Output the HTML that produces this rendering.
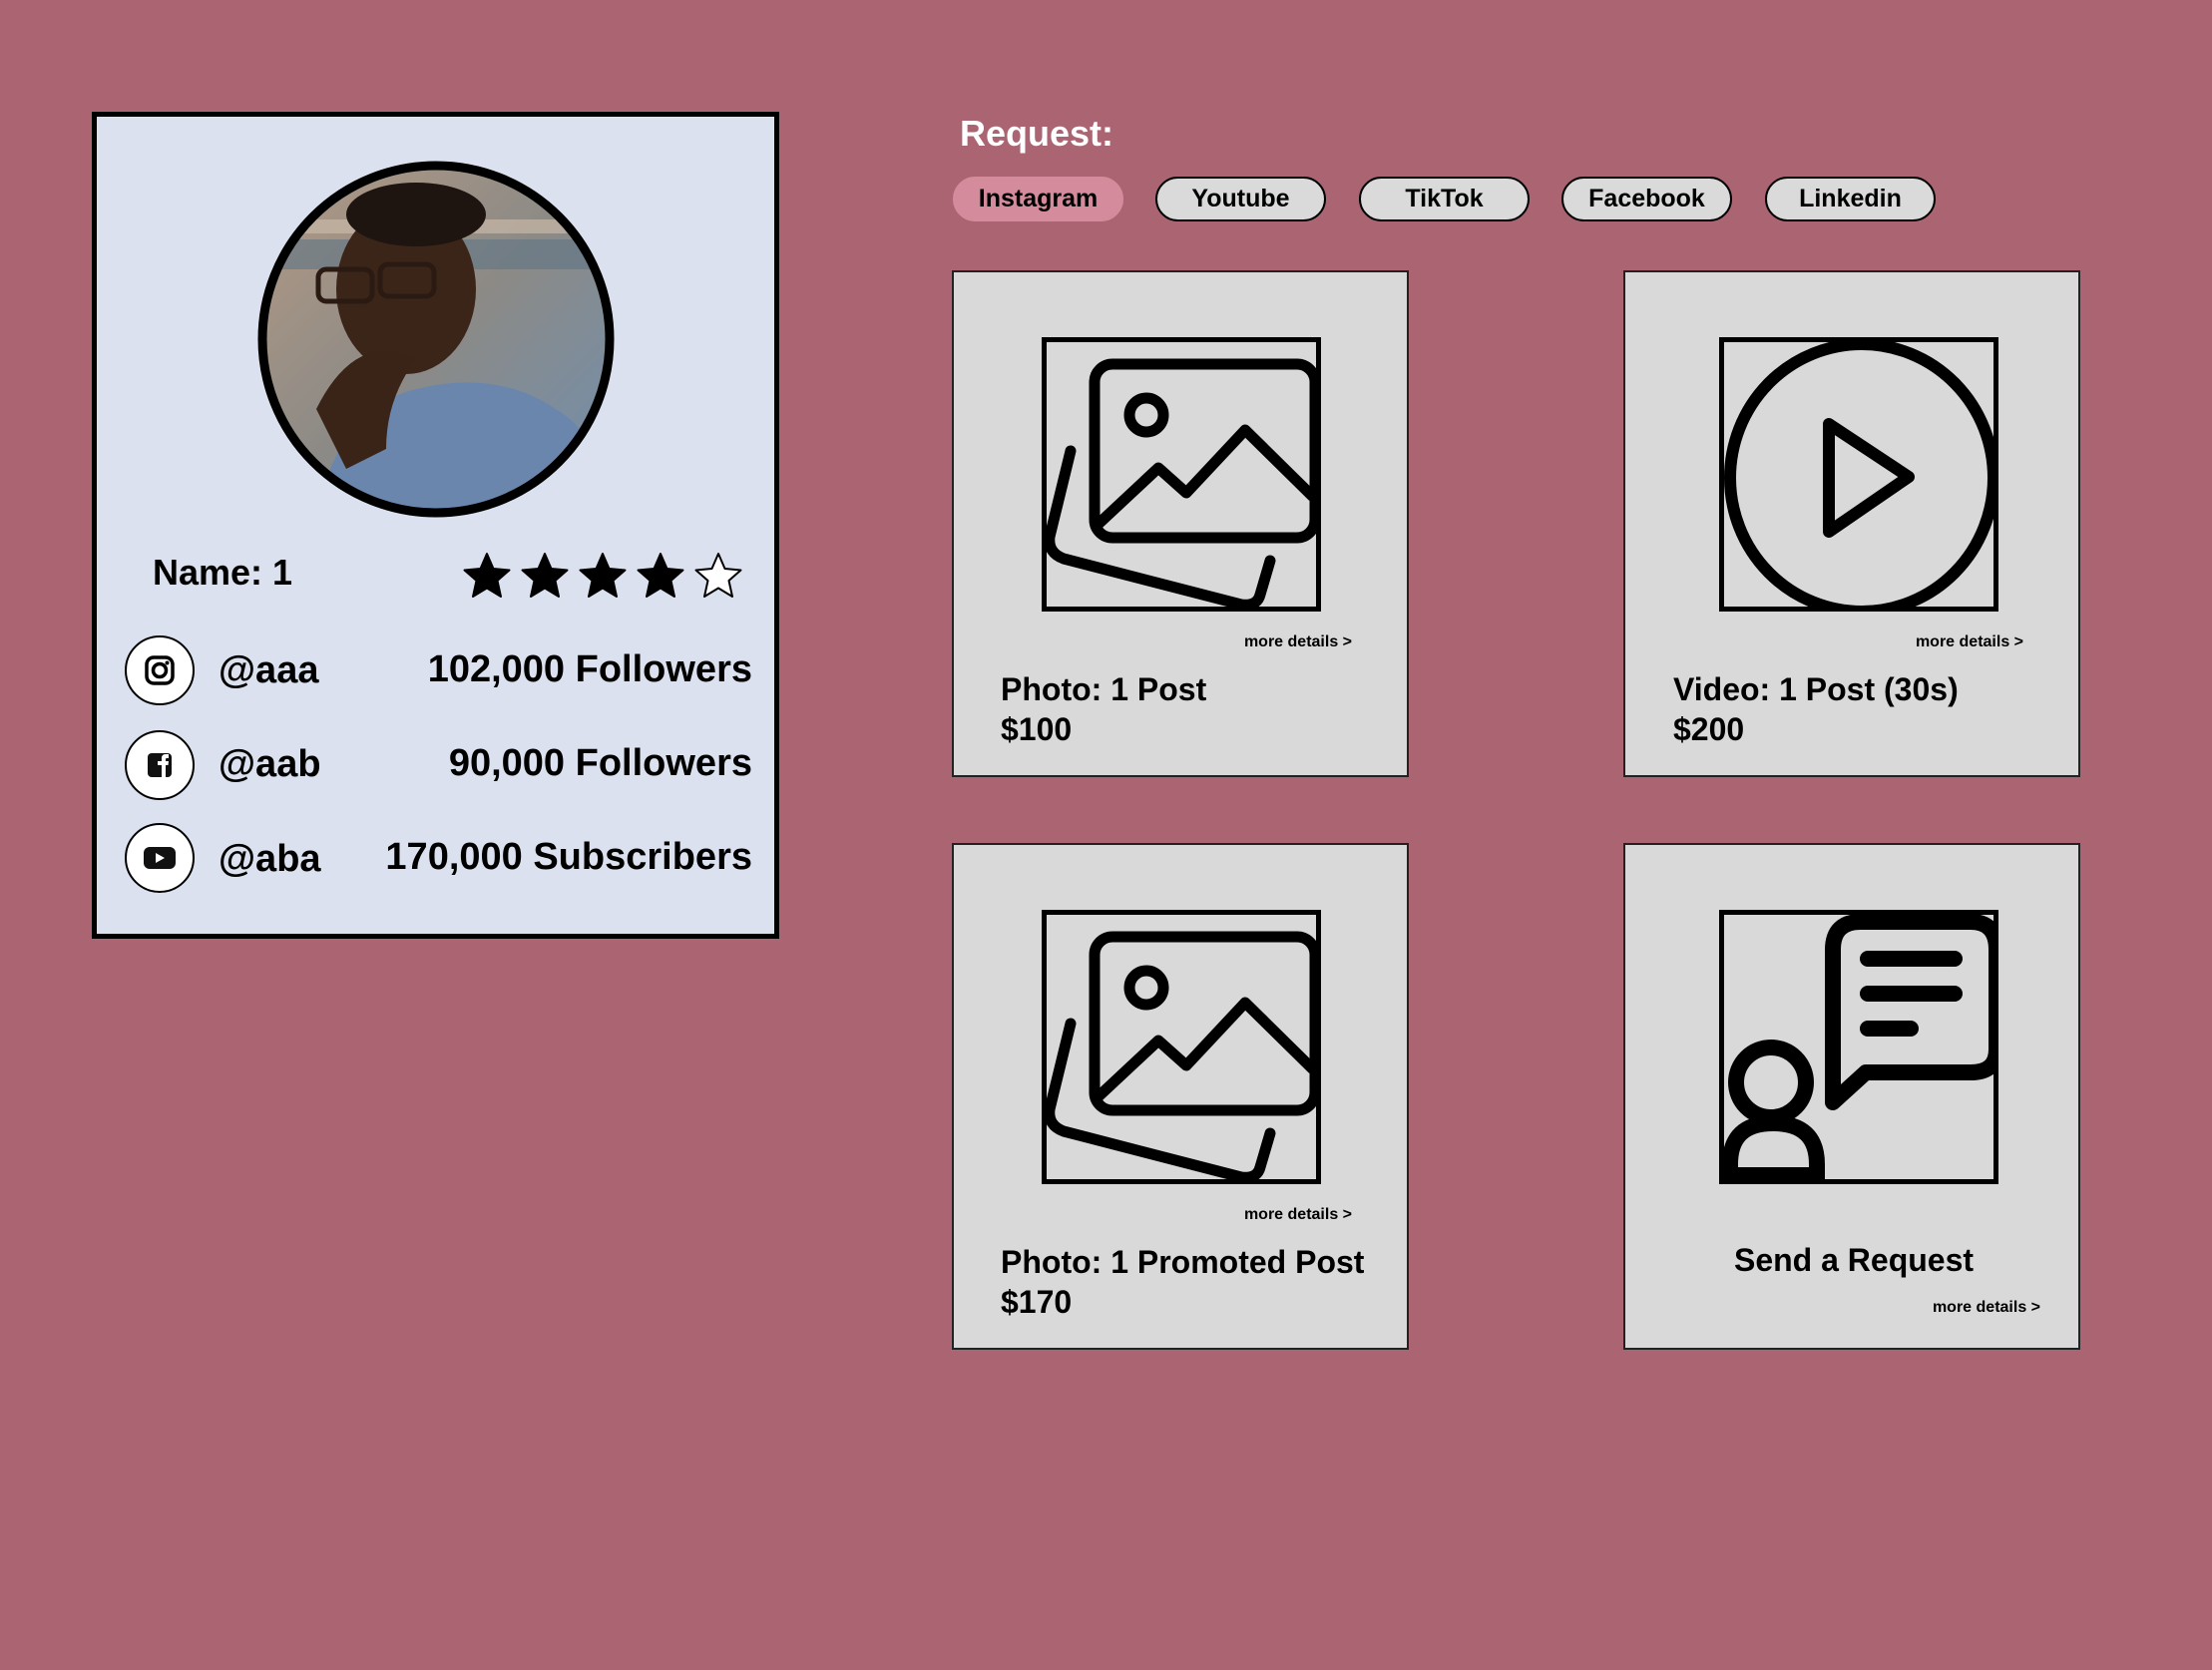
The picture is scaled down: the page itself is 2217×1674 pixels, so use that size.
<!DOCTYPE html>
<html><head><meta charset="utf-8"><style>
*{box-sizing:border-box;margin:0;padding:0}
body{width:2217px;height:1674px;background:#ab6472;font-family:"Liberation Sans",Arial,sans-serif;font-weight:bold;position:relative;overflow:hidden;color:#000}
.abs{position:absolute}
.profile{left:92px;top:112px;width:689px;height:829px;background:#dbe1ef;border:5px solid #000}
.txt{position:absolute;white-space:nowrap;line-height:1}
.soc{position:absolute;width:70px;height:70px;border-radius:50%;background:#fff;border:2px solid #000;left:28px}
.tab{position:absolute;top:177px;width:171px;height:45px;border-radius:23px;border:2px solid #000;background:#dadada;font-size:25px;text-align:center;line-height:41px}
.card{position:absolute;width:458px;height:508px;background:#d9d9d9;border:2px solid #222}
.box{position:absolute;top:65px;width:280px;height:275px;border:5px solid #000;overflow:hidden}
.box svg{position:absolute;left:-5px;top:-5px}
.md{position:absolute;font-size:16px;right:55px;top:362px}
.t1{position:absolute;left:47px;font-size:32px;top:400px}
.t2{position:absolute;left:47px;font-size:32px;top:440px}
</style></head><body>

<div class="abs profile">
  <svg class="abs" style="left:160px;top:43px" width="360" height="360" viewBox="0 0 360 360">
    <defs><clipPath id="cp"><circle cx="180" cy="180" r="174"/></clipPath>
    <linearGradient id="bg" x1="0" y1="0" x2="1" y2="1"><stop offset="0" stop-color="#b49a84"/><stop offset=".5" stop-color="#8c8a86"/><stop offset="1" stop-color="#6f8fb0"/></linearGradient></defs>
    <g clip-path="url(#cp)">
      <rect width="360" height="360" fill="url(#bg)"/>
      <rect x="0" y="80" width="360" height="30" fill="#5f7486" opacity=".6"/>
      <rect x="0" y="60" width="360" height="14" fill="#c8b8a6" opacity=".7"/>
      <path d="M60 360 Q80 250 160 230 Q240 210 300 250 Q350 280 360 360Z" fill="#6b86ad"/>
      <ellipse cx="150" cy="130" rx="70" ry="85" fill="#3b2418"/>
      <ellipse cx="160" cy="55" rx="70" ry="32" fill="#1e1410"/>
      <path d="M60 250 Q100 170 160 200 Q130 240 130 290 L90 310Z" fill="#3a2418"/>
      <rect x="62" y="110" width="54" height="32" rx="8" fill="none" stroke="#2a1a12" stroke-width="5"/>
      <rect x="124" y="105" width="54" height="32" rx="8" fill="none" stroke="#2a1a12" stroke-width="5"/>
    </g>
    <circle cx="180" cy="180" r="174" fill="none" stroke="#000" stroke-width="9"/>
  </svg>
  <div class="txt" style="left:56px;top:439px;font-size:36px">Name: 1</div>
  <svg class="abs" style="left:366px;top:434px" width="290" height="58" viewBox="0 0 290 58">
    <g fill="#000">
      <path id="st" d="M25 4 L31.5 19 L47.5 20.5 L35.5 31 L39 47 L25 38.5 L11 47 L14.5 31 L2.5 20.5 L18.5 19Z" stroke="#000" stroke-width="2" stroke-linejoin="round"/>
      <use href="#st" x="58"/><use href="#st" x="116"/><use href="#st" x="174"/>
    </g>
    <path d="M257 4 L263.5 19 L279.5 20.5 L267.5 31 L271 47 L257 38.5 L243 47 L246.5 31 L234.5 20.5 L250.5 19Z" fill="#fff" stroke="#000" stroke-width="2" stroke-linejoin="round"/>
  </svg>

  <div class="soc" style="top:520px"><svg width="66" height="66" viewBox="0 0 66 66"><rect x="20" y="20" width="26" height="26" rx="7" fill="none" stroke="#000" stroke-width="3.5"/><circle cx="33" cy="33" r="6.5" fill="none" stroke="#000" stroke-width="3.5"/><circle cx="40.5" cy="25.5" r="2" fill="#000"/></svg></div>
  <div class="soc" style="top:615px"><svg width="66" height="66" viewBox="0 0 66 66"><rect x="21" y="21" width="24" height="24" rx="4" fill="#111"/><path d="M35 45 V33 H31 V29 H35 V26 Q35 22 39 22 H42 V26 H40 Q39 26 39 27.5 V29 H42 L41.5 33 H39 V45Z" fill="#fff"/></svg></div>
  <div class="soc" style="top:708px"><svg width="66" height="66" viewBox="0 0 66 66"><rect x="17" y="22" width="32" height="22" rx="6" fill="#111"/><path d="M29 28 L38 33 L29 38Z" fill="#fff"/></svg></div>

  <div class="txt" style="left:122px;top:536px;font-size:38px">@aaa</div>
  <div class="txt" style="left:122px;top:630px;font-size:38px">@aab</div>
  <div class="txt" style="left:122px;top:725px;font-size:38px">@aba</div>
  <div class="txt" style="right:22px;top:535px;font-size:38px">102,000 Followers</div>
  <div class="txt" style="right:22px;top:629px;font-size:38px">90,000 Followers</div>
  <div class="txt" style="right:22px;top:723px;font-size:38px">170,000 Subscribers</div>
</div>

<div class="txt" style="left:962px;top:116px;font-size:36px;color:#fff">Request:</div>
<div class="tab" style="left:955px;background:#d48b9c;border-color:#d48b9c">Instagram</div>
<div class="tab" style="left:1158px">Youtube</div>
<div class="tab" style="left:1362px">TikTok</div>
<div class="tab" style="left:1565px">Facebook</div>
<div class="tab" style="left:1769px">Linkedin</div>

<div class="card" style="left:954px;top:271px">
  <div class="box" style="left:88px">
    <svg width="280" height="275" viewBox="0 0 280 275" fill="none" stroke="#000" stroke-width="11" stroke-linecap="round" stroke-linejoin="round">
      <rect x="53" y="27" width="221" height="174" rx="18"/>
      <circle cx="105" cy="78" r="17"/>
      <path d="M56 188 L117 131 L145 156 L204 93 L271 159"/>
      <path d="M29 114 L8 200 Q6 216 22 222 L200 268 Q216 270 219 258 L229 224"/>
    </svg>
  </div>
  <div class="md">more details &gt;</div>
  <div class="t1">Photo: 1 Post</div>
  <div class="t2">$100</div>
</div>

<div class="card" style="left:1627px;top:271px">
  <div class="box" style="left:94px">
    <svg width="280" height="275" viewBox="0 0 280 275" fill="none" stroke="#000" stroke-width="12" stroke-linecap="round" stroke-linejoin="round">
      <ellipse cx="143" cy="141" rx="132" ry="134"/>
      <path d="M110 87 L190 140 L110 195Z"/>
    </svg>
  </div>
  <div class="md">more details &gt;</div>
  <div class="t1" style="left:48px">Video: 1 Post (30s)</div>
  <div class="t2" style="left:48px">$200</div>
</div>

<div class="card" style="left:954px;top:845px">
  <div class="box" style="left:88px">
    <svg width="280" height="275" viewBox="0 0 280 275" fill="none" stroke="#000" stroke-width="11" stroke-linecap="round" stroke-linejoin="round">
      <rect x="53" y="27" width="221" height="174" rx="18"/>
      <circle cx="105" cy="78" r="17"/>
      <path d="M56 188 L117 131 L145 156 L204 93 L271 159"/>
      <path d="M29 114 L8 200 Q6 216 22 222 L200 268 Q216 270 219 258 L229 224"/>
    </svg>
  </div>
  <div class="md">more details &gt;</div>
  <div class="t1">Photo: 1 Promoted Post</div>
  <div class="t2">$170</div>
</div>

<div class="card" style="left:1627px;top:845px">
  <div class="box" style="left:94px">
    <svg width="280" height="275" viewBox="0 0 280 275" fill="none" stroke="#000" stroke-width="16" stroke-linecap="round" stroke-linejoin="round">
      <path d="M114 193 V40 Q114 12 142 12 H252 Q278 12 278 40 V140 Q278 163 252 163 H147 Z"/>
      <path d="M149 49 H236 M149 84 H236 M149 119 H192"/>
      <circle cx="52" cy="173" r="35"/>
      <path d="M11 275 V255 Q11 214 54 214 Q98 214 98 255 V275" stroke-linecap="butt"/>
      <rect x="5" y="258" width="100" height="20" fill="#000" stroke="none"/>
    </svg>
  </div>
  <div class="txt" style="left:0;width:458px;text-align:center;top:400px;font-size:32px">Send a Request</div>
  <div class="md" style="right:38px;top:455px">more details &gt;</div>
</div>
</body></html>
